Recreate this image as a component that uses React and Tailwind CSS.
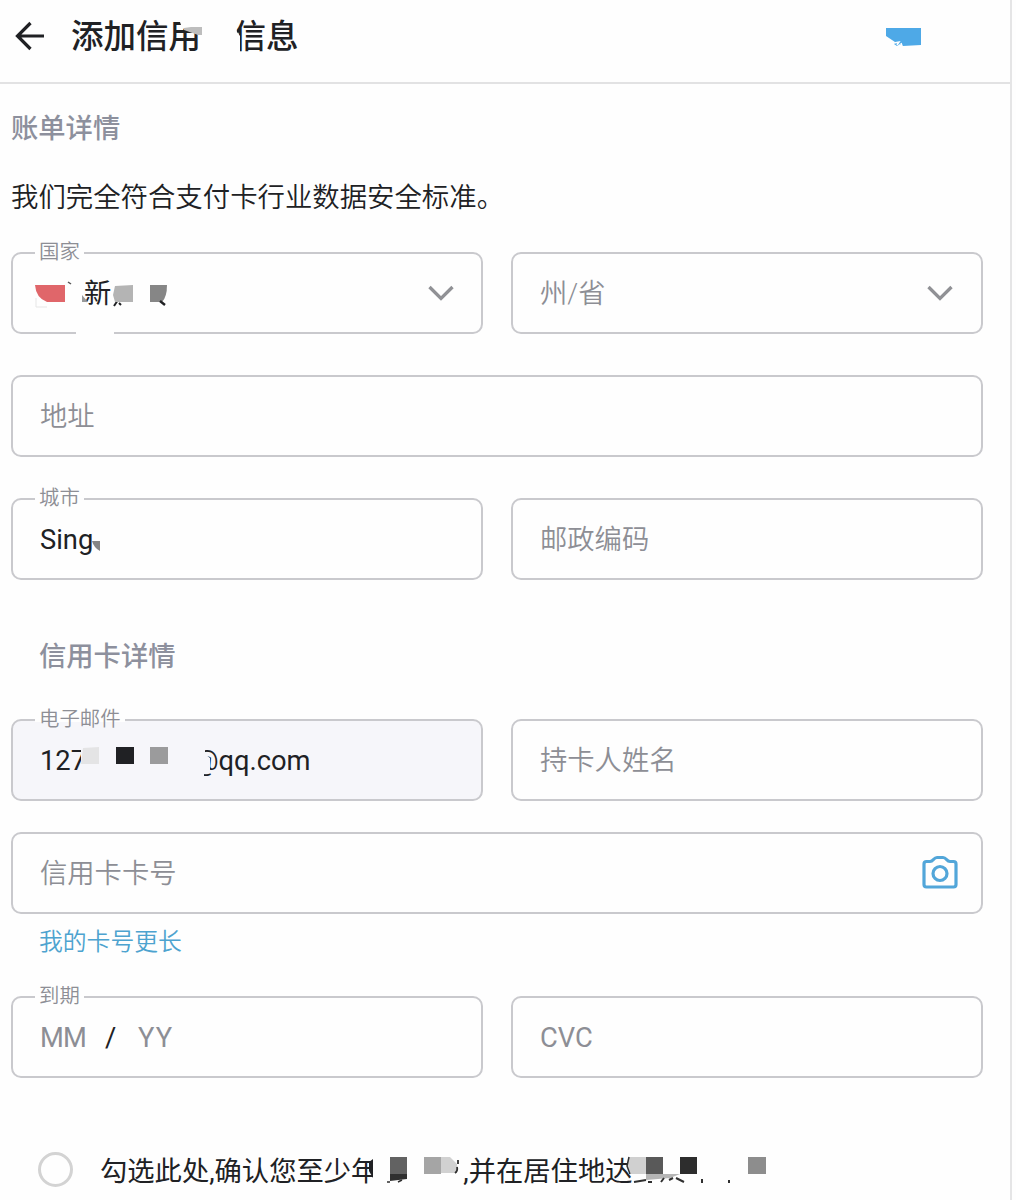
import { useState } from 'react'

function ChevronDown() {
  return (
    <svg className="w-7 h-7 shrink-0" viewBox="0 0 28 28" fill="none" stroke="#909195" strokeWidth="3.3">
      <path d="M2.5 8L14 19.5L25.5 8" />
    </svg>
  )
}

function Camera() {
  return (
    <svg className="w-9 h-9 shrink-0" viewBox="0 0 36 36" fill="none" stroke="#52a6d9" strokeWidth="3.2" strokeLinejoin="round">
      <path d="M4.5 6.5H8C11.5 6.5 11.5 2.5 15 2.5H21C24.5 2.5 24.5 6.5 28 6.5H31.5Q34 6.5 34 9V29.5Q34 32 31.5 32H4.5Q2 32 2 29.5V9Q2 6.5 4.5 6.5Z" />
      <circle cx="18" cy="18.5" r="7" />
    </svg>
  )
}

function Field({ label, filled, right, children }) {
  return (
    <div
      className={`relative flex items-center justify-between h-[82px] pl-[27px] pr-[27px] rounded-[10px] border-2 border-[#c9c9cd] text-[27.3px] text-[#8d8e95] ${
        filled ? 'bg-[#f6f6fa]' : ''
      }`}
    >
      {label && (
        <span className="isolate absolute left-[22px] -top-[17px] px-1 leading-[30px] text-[20.4px] font-[350] whitespace-nowrap before:content-[''] before:absolute before:-z-10 before:inset-x-0 before:top-[14px] before:h-[4px] before:bg-[#fefefe]">
          {label}
        </span>
      )}
      <div className="pt-[3px] font-[350] whitespace-nowrap">{children}</div>
      {right}
    </div>
  )
}

export default function App() {
  const [agreed, setAgreed] = useState(false)

  return (
    <div className="w-[1016px] h-[1200px] overflow-hidden bg-[#fefefe] font-['Roboto','Noto_Sans_CJK_SC',sans-serif] text-[#202124]">
      <div className="w-[1012px] h-full border-r-2 border-[#e5e5e6]">
        {/* Header */}
        <header className="flex items-center h-[84px] pb-[10px] border-b-2 border-[#e2e2e3]">
          <svg className="w-[30px] h-[30px] ml-[15px]" viewBox="0 0 30 30" fill="none" stroke="#202124" strokeWidth="3.2">
            <path d="M29 15H3M15.5 2L2.5 15L15.5 28" />
          </svg>
          <h1 className="relative ml-[26px] pt-[2px] text-[32.5px] leading-[48px] font-medium whitespace-nowrap">
            添加信用<span className="inline-block w-[32.5px]" />信息
            <svg className="absolute left-[98px] top-[1px] w-[76px] h-[48px]" viewBox="0 0 76 48">
              <path d="M9 4H36V21L22 20L13 16Z" fill="#fefefe" />
              <path d="M15 16L22 15H33V23H29L15 18Z" fill="#bdbdbd" />
              <path d="M64 8H66L68 20L71 24V42H64Z" fill="#fefefe" />
            </svg>
          </h1>
          <svg className="w-[36px] h-[20px] ml-auto mr-[89px] mt-[2px]" viewBox="0 0 36 20">
            <path d="M1 1H36V18L18 19L15 17L12 19L9 17L10 15L1 9Z" fill="#4ea9e7" />
            <path d="M9 16L14 15L12 18M16 16L17 19" stroke="#fefefe" strokeWidth="1.5" fill="none" />
          </svg>
        </header>

        <main className="pl-[11px] pr-[27px]">
          {/* Billing details */}
          <h2 className="mt-[25px] h-[40px] leading-[40px] text-[27.3px] font-medium text-[#8d909d]">账单详情</h2>
          <p className="mt-[29px] h-[40px] leading-[40px] text-[27.4px] font-[350]">我们完全符合支付卡行业数据安全标准。</p>

          <div className="grid grid-cols-[472px_472px] gap-x-[28px] mt-[34px]">
            <Field label="国家" right={<span className="-mr-[1px]"><ChevronDown /></span>}>
              <span className="ml-[44px] text-[#202124] font-normal">新</span>
              <svg className="absolute left-[20px] top-[24px] w-[140px] h-[34px]" viewBox="0 0 140 34">
                <path d="M3 20V29H14" stroke="#e6e6e6" fill="none" />
                <path d="M2 7H32V24H14Q3 20 2 7Z" fill="#e0666a" />
                <path d="M35 4L38 6" stroke="#555" strokeWidth="1.5" />
                <path d="M49 17L55 24H49Z" fill="#999" />
                <path d="M85 22L81 28M86 25L88 27" stroke="#202124" strokeWidth="2" />
                <path d="M82 8L100 7V24H82L80 17Z" fill="#b4b4b4" />
                <path d="M117 7H134Q134 19 129 24H117Z" fill="#868686" />
                <path d="M127 23L132 27" stroke="#202124" strokeWidth="2.5" />
              </svg>
              <span className="absolute left-[63px] -bottom-[2px] w-[38px] h-[2px] bg-[#fefefe]" />
            </Field>
            <Field right={<ChevronDown />}>州/省</Field>
          </div>

          <div className="mt-[41px]">
            <Field>地址</Field>
          </div>

          <div className="grid grid-cols-[472px_472px] gap-x-[28px] mt-[41px]">
            <Field label="城市">
              <span className="text-[#202124] font-normal">Sing</span>
              <svg className="absolute left-[79px] top-[40px] w-[8px] h-[12px]" viewBox="0 0 8 12">
                <path d="M0 1H8V11Q2 8 0 1Z" fill="#858585" />
              </svg>
            </Field>
            <Field>邮政编码</Field>
          </div>

          {/* Card details */}
          <h2 className="ml-[28px] mt-[57px] h-[40px] leading-[40px] text-[27.3px] font-medium text-[#8d909d]">信用卡详情</h2>

          <div className="grid grid-cols-[472px_472px] gap-x-[28px] mt-[42px]">
            <Field label="电子邮件" filled>
              <span className="text-[#202124] font-normal">
                127<span className="inline-block w-[108px]" />@qq.com
              </span>
              <svg className="absolute left-[60px] top-[20px] w-[150px] h-[40px]" viewBox="0 0 150 40">
                <path d="M8 5H30V32H8Z" fill="#f6f6fa" />
                <path d="M10 7L26 6V23H8Z" fill="#e4e4e5" />
                <path d="M43 6H61V23H43Z" fill="#202124" />
                <path d="M77 6H95V23H77Z" fill="#9b9b9c" />
                <path d="M112 4H132V13L137 17V29L131 32V38H112Z" fill="#f6f6fa" />
              </svg>
            </Field>
            <Field>持卡人姓名</Field>
          </div>

          <div className="mt-[31px]">
            <Field right={<span className="-mr-[4px]"><Camera /></span>}>信用卡卡号</Field>
          </div>
          <a href="#" className="block ml-[28px] mt-[10px] h-[36px] leading-[36px] text-[23.8px] font-[350] text-[#4da3cf]">我的卡号更长</a>

          <div className="grid grid-cols-[472px_472px] gap-x-[28px] mt-[36px]">
            <Field label="到期">
              <div className="flex font-normal">
                <span className="w-[65px] tracking-[-0.8px]">MM</span>
                <span className="w-[33px] text-[#202124]">/</span>
                <span className="tracking-[1px]">YY</span>
              </div>
            </Field>
            <Field>
              <span className="font-normal">CVC</span>
            </Field>
          </div>

          {/* Age confirmation */}
          <div className="relative flex items-center mt-[71px] ml-[27px] h-[40px] text-[27.3px] leading-[40px] whitespace-nowrap">
            <button
              onClick={() => setAgreed(!agreed)}
              className={`w-[35px] h-[35px] rounded-full border-[3px] border-[#d3d3d3] mr-[27px] ${agreed ? 'bg-[#50a7dc]' : ''}`}
            />
            <span className="pt-[5px]">
              勾选此处,确认您至少年<span className="inline-block w-[85px]" />,并在居住地达
            </span>
            <svg className="absolute left-[322px] top-0 w-[420px] h-[40px]" viewBox="0 0 420 40">
              <path d="M13 2H20V40H13Z" fill="#fefefe" />
              <path d="M13 10V29L9 22V13Z" fill="#202124" />
              <path d="M30 8H47V25H30Z" fill="#626262" />
              <path d="M30 25H47V30L30 32Z" fill="#303030" />
              <path d="M27 33H30M38 33L42 31" stroke="#303030" strokeWidth="1.5" />
              <path d="M64 8H81V25H64Z" fill="#a5a5a5" />
              <path d="M81 8H90L97 15V24H81Z" fill="#d1d1d1" />
              <path d="M98 11V15M97 18Q98 22 95 24" stroke="#303030" strokeWidth="1.8" fill="none" />
              <path d="M269 8H286V25H271L267 17Z" fill="#d0d0d0" />
              <path d="M269 8L267 17L270 25" stroke="#303030" strokeWidth="1.5" fill="none" />
              <path d="M286 8H303V25H286Z" fill="#595959" />
              <path d="M286 25H320L310 29L286 31Z" fill="#b5b5b5" />
              <path d="M274 33L286 31M288 33H292M301 33L304 29M309 31L313 29M316 29L324 33" stroke="#303030" strokeWidth="2" />
              <path d="M320 8H337V25H320Z" fill="#2d2d2d" />
              <path d="M342 30V34M369 31V34" stroke="#303030" strokeWidth="2" />
              <path d="M388 8H406V25H388Z" fill="#8d8d8d" />
            </svg>
          </div>
        </main>
      </div>
    </div>
  )
}
